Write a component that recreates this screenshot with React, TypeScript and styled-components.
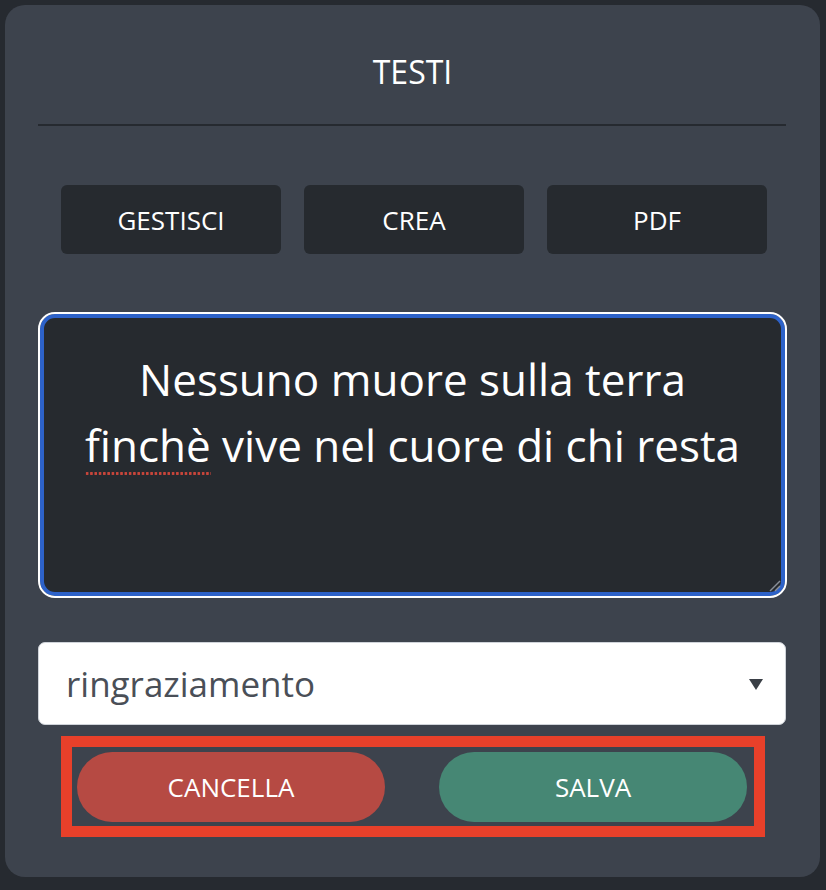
import React from "react";
import styled, { createGlobalStyle } from "styled-components";

const Global = createGlobalStyle`
  html, body { margin: 0; padding: 0; background: #262a30; }
  body { font-family: "Open Sans", "Noto Sans", sans-serif; }
  * { box-sizing: border-box; }
`;

const Page = styled.div`
  padding: 5px;
  min-height: 890px;
  background: #262a30;
`;

const Card = styled.div`
  width: 815px;
  height: 872px;
  background: #3d434d;
  border-radius: 20px;
  padding: 43px 33px 0 33px;
  display: flex;
  flex-direction: column;
  align-items: flex-start;
`;

const Title = styled.h1`
  margin: 0;
  width: 100%;
  text-align: center;
  font-size: 32px;
  line-height: 48px;
  font-weight: 400;
  color: #ffffff;
`;

const Divider = styled.hr`
  margin: 28px 0 0 0;
  width: 748px;
  height: 2px;
  border: none;
  background: #262a30;
`;

const ButtonRow = styled.div`
  margin-top: 59px;
  padding-left: 23px;
  display: flex;
  gap: 23px;
`;

const DarkButton = styled.button`
  width: 220px;
  height: 69px;
  border: none;
  border-radius: 6px;
  background: #262a2f;
  color: #ffffff;
  font-family: "Open Sans", "Noto Sans", sans-serif;
  font-size: 26px;
  display: flex;
  align-items: center;
  justify-content: center;
  padding: 0;
`;

const Editor = styled.div`
  position: relative;
  margin-top: 58px;
  width: 749px;
  height: 286px;
  background: #262a2f;
  border: 2px solid #ffffff;
  border-radius: 17px;
  box-shadow: inset 0 0 0 4px #2d62c9;
  padding: 32px 20px 0 20px;
  text-align: center;
  color: #ffffff;
  font-size: 44px;
  line-height: 66px;
`;

const Misspelled = styled.span`
  position: relative;
  &::after {
    content: "";
    position: absolute;
    left: 0;
    right: 0;
    bottom: 0px;
    height: 3px;
    background-image: radial-gradient(circle, #c9453a 1.3px, transparent 1.5px);
    background-size: 4.3px 3px;
    background-repeat: repeat-x;
  }
`;

const Grip = styled.svg`
  position: absolute;
  right: 4px;
  bottom: 4px;
`;

const Select = styled.div`
  margin-top: 44px;
  width: 748px;
  height: 83px;
  background: #ffffff;
  border: 1px solid #cfd3d9;
  border-radius: 7px;
  display: flex;
  align-items: center;
  justify-content: space-between;
  padding: 0 22px 0 27px;
  color: #4a4f57;
  font-size: 35px;
`;

const Caret = styled.span`
  width: 0;
  height: 0;
  border-left: 7px solid transparent;
  border-right: 7px solid transparent;
  border-top: 11px solid #3a3f46;
  margin-top: 2px;
`;

const Frame = styled.div`
  margin-top: 11px;
  margin-left: 23px;
  width: 704px;
  height: 101px;
  border: 11px solid #e8402a;
  padding: 5px 7px 4px 5px;
  display: flex;
  justify-content: space-between;
`;

const PillButton = styled.button<{ $tone: "danger" | "success" }>`
  width: 308px;
  height: 70px;
  border: none;
  border-radius: 35px;
  background: ${(p) => (p.$tone === "danger" ? "#b64a43" : "#468774")};
  color: #ffffff;
  font-family: "Open Sans", "Noto Sans", sans-serif;
  font-size: 26px;
  display: flex;
  align-items: center;
  justify-content: center;
  padding: 0;
`;

export default function App() {
  return (
    <>
      <Global />
      <Page>
        <Card>
          <Title>TESTI</Title>
          <Divider />
          <ButtonRow>
            <DarkButton>GESTISCI</DarkButton>
            <DarkButton>CREA</DarkButton>
            <DarkButton>PDF</DarkButton>
          </ButtonRow>
          <Editor role="textbox">
            Nessuno muore sulla terra
            <br />
            <Misspelled>finchè</Misspelled> vive nel cuore di chi resta
            <Grip width="14" height="14" viewBox="0 0 14 14">
              <path d="M13 3 L3 13" stroke="#8a9099" strokeWidth="1.4" />
              <path d="M13 8 L8 13" stroke="#8a9099" strokeWidth="1.4" />
            </Grip>
          </Editor>
          <Select>
            <span>ringraziamento</span>
            <Caret />
          </Select>
          <Frame>
            <PillButton $tone="danger">CANCELLA</PillButton>
            <PillButton $tone="success">SALVA</PillButton>
          </Frame>
        </Card>
      </Page>
    </>
  );
}
